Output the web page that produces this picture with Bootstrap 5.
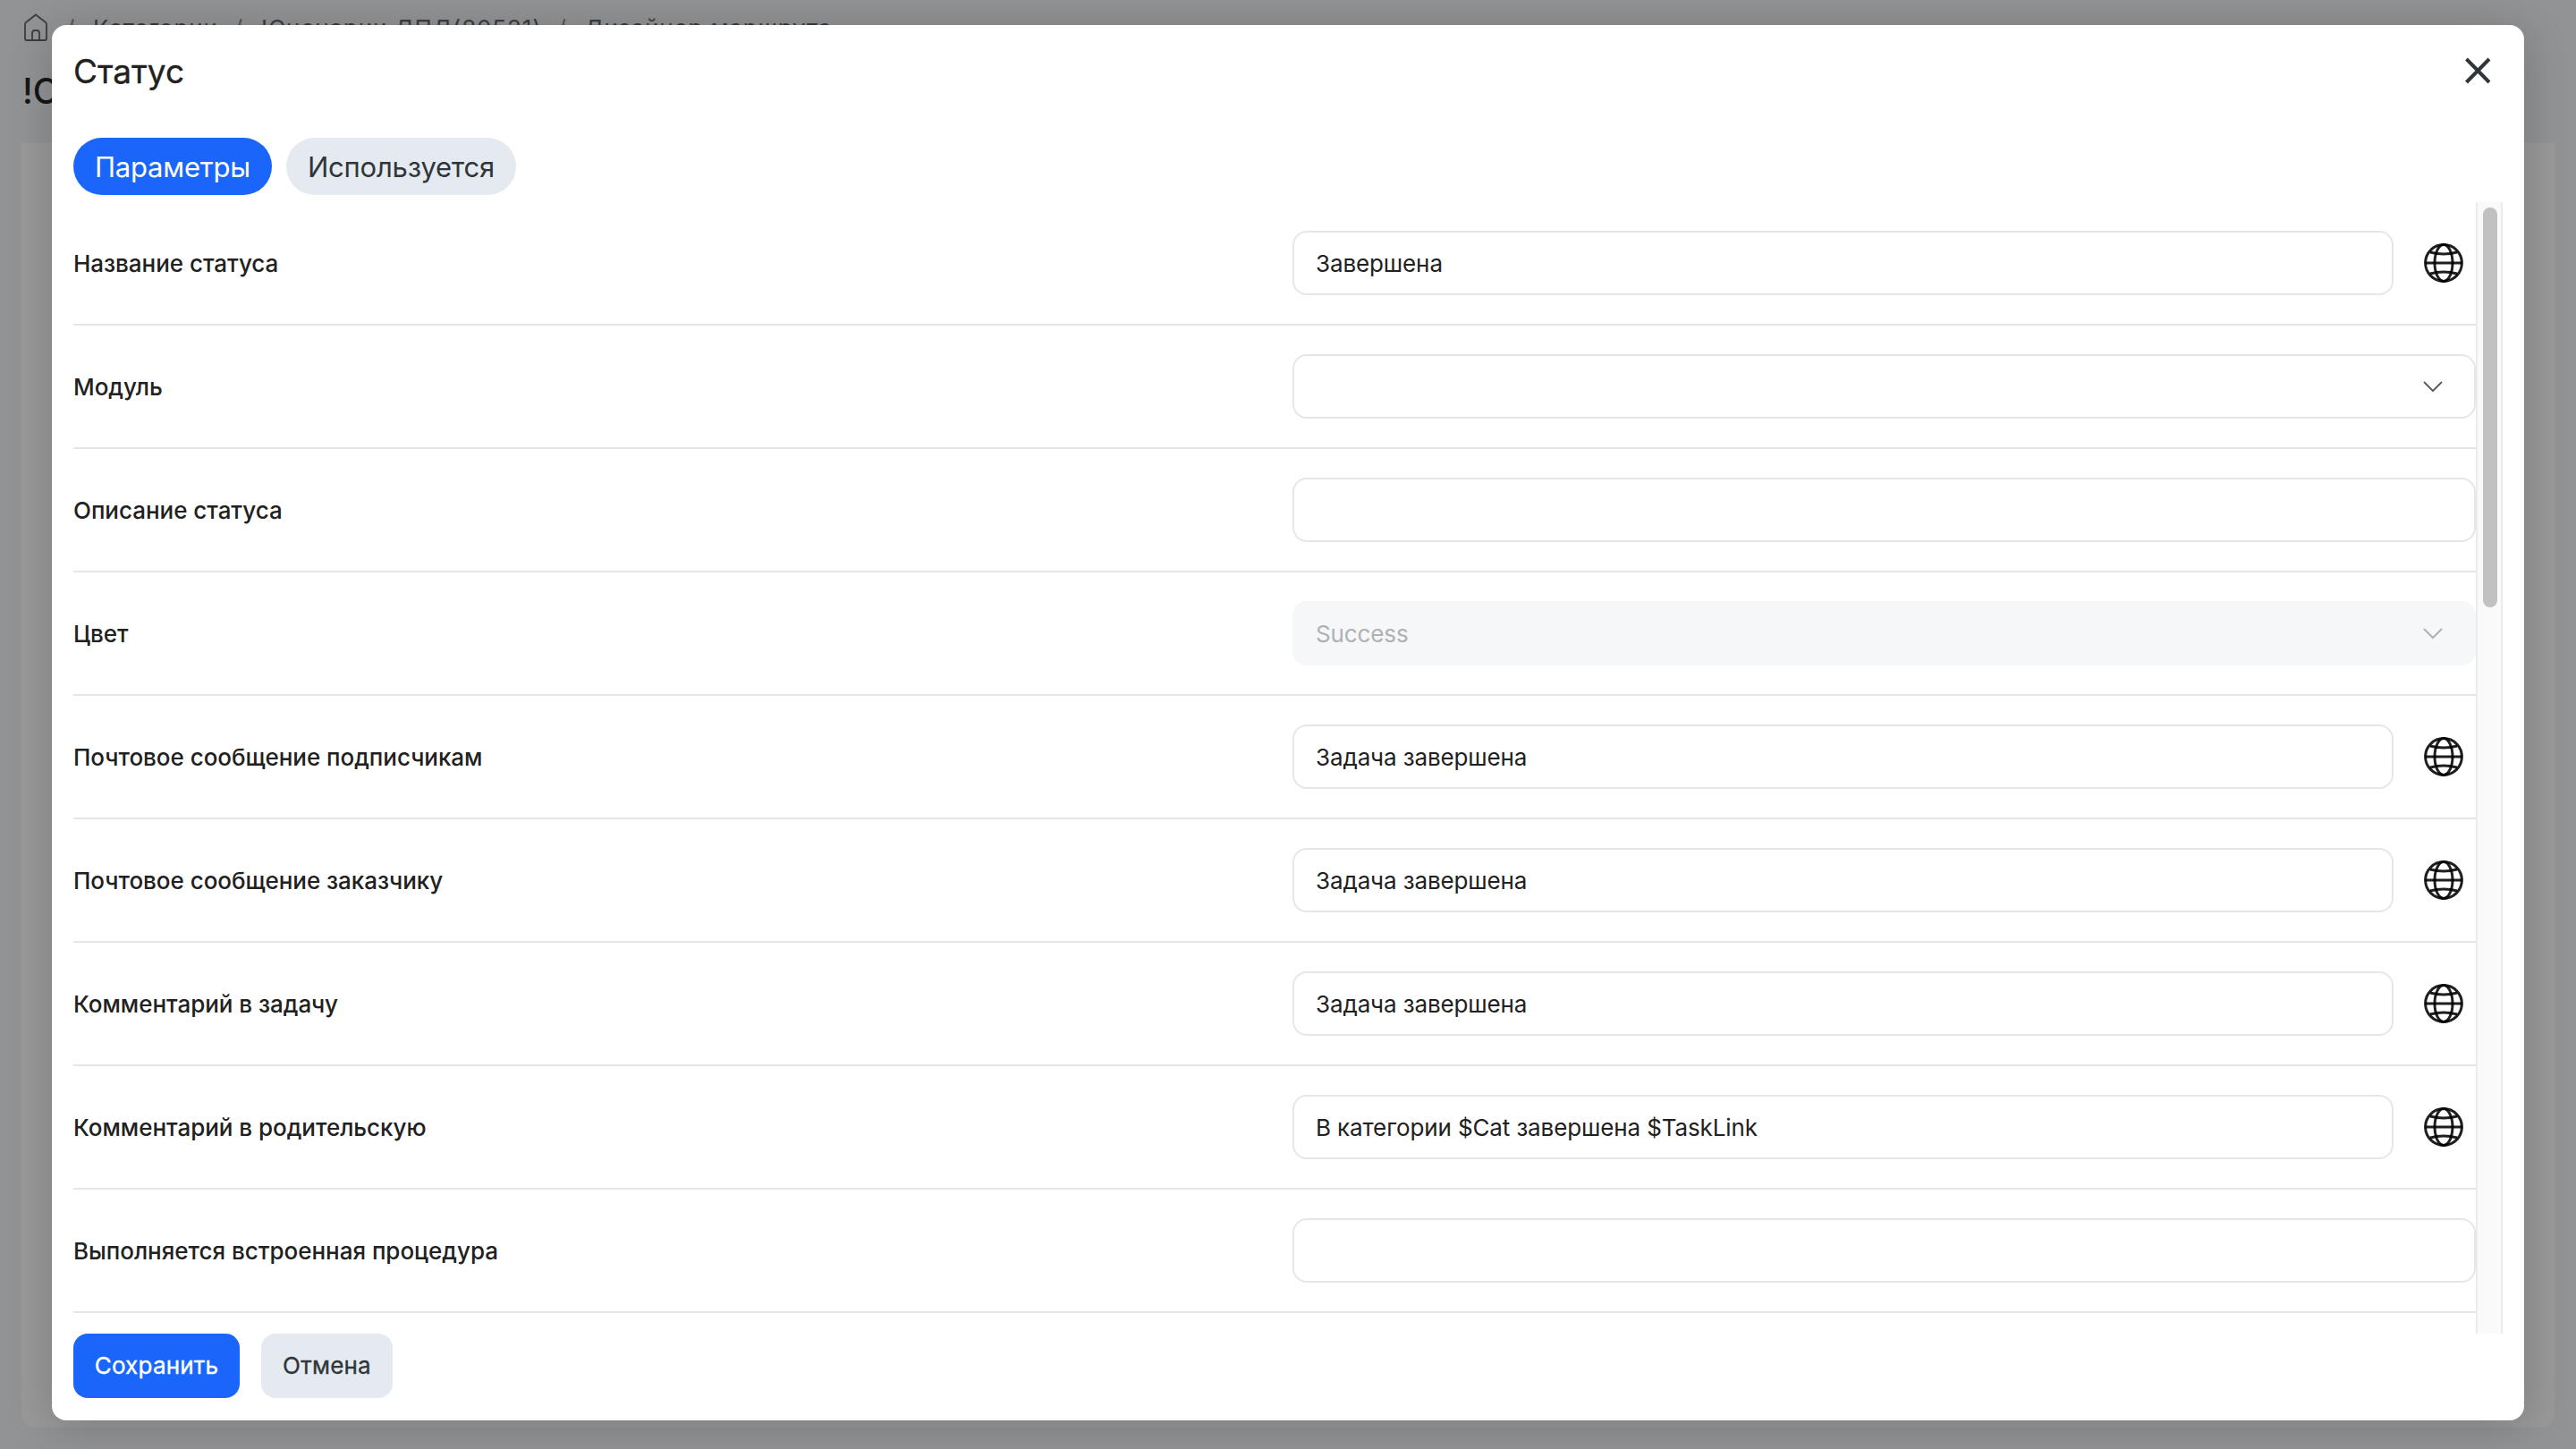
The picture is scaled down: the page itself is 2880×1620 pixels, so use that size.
<!DOCTYPE html>
<html lang="ru">
<head>
<meta charset="utf-8">
<title>Статус</title>
<link rel="stylesheet" href="https://cdn.jsdelivr.net/npm/bootstrap@5.3.0/dist/css/bootstrap.min.css">
<style>
html, body { height: 1620px; overflow: hidden; }
body { font-family: Inter, "Liberation Sans", sans-serif; font-size: 26px; line-height: 40px; color: #212121; background: #929395; letter-spacing: -.12px; }
.page { height: 1620px; padding: 12px 24px 0; }
.crumbs { height: 40px; color: #3c3d3e; font-size: 26px; letter-spacing: .85px; white-space: nowrap; }
.crumbs svg { margin-top: -2px; }
.crumb-s { margin: 0 20px 0 18px; width: 10px; color: #555; }
.page-title { height: 60px; margin-top: 20px; padding-left: 1px; font-size: 39px; font-weight: 500; line-height: 60px; color: #161616; white-space: nowrap; letter-spacing: 0; }
.page-panel { height: 1436px; margin-top: 28px; background: #999; border-radius: 0 0 15px 15px; }
.dialog { position: absolute; left: 58px; top: 28px; width: 2764px; height: 1560px; border-radius: 16px; padding: 0 24px; box-shadow: 0 6px 50px rgba(0,0,0,.2); }
.dialog-title { height: 102px; padding-top: 1px; font-size: 37px; -webkit-text-stroke: .35px currentColor; letter-spacing: 0; }
.close-x { margin: -2px 12px 0 0; }
.tab-row { height: 96px; padding-top: 24px; gap: 16px; }
.tab-pill { height: 64px; line-height: 64px; border-radius: 32px; padding: 1px 0 0; text-align: center; font-size: 31px; letter-spacing: -.2px; border: 0; }
.tab-a { width: 222px; } .tab-b { width: 257px; }
.c-blue { background: #1b66fa; color: #fff; } .c-gray { background: #e5eaf1; color: #30363a; }
.scroll { height: 1265px; }
.rows { width: 2686px; }
.form-line { height: 138px; border-bottom: 2px solid #e6e6e6; }
.lbl { width: 1363px; font-weight: 500; letter-spacing: -.03px; padding-top: 2px; }
.box { height: 72px; border: 2px solid #e6e6e6; border-radius: 16px; padding: 2px 35px 0 24px; color: #212121; }
.box svg { margin-top: -2px; }
.box-off { background: #f5f7f9; border-color: #f5f7f9; color: #b0b1b2; }
.globe-btn { width: 92px; padding-left: 34px; }
.track { width: 30px; background: #fafafa; border: solid #ebebeb; border-width: 0 2px; padding: 6px; }
.thumb { width: 16px; height: 447px; border-radius: 8px; background: #c1c1c1; }
.act { height: 72px; border-radius: 16px; border: 0; padding: 0; font-size: 26px; -webkit-text-stroke: .35px currentColor; letter-spacing: .2px; }
.act-a { width: 186px; } .act-b { width: 147px; }
svg { display: block; flex: none; }
</style>
</head>
<body>
<svg width="0" height="0" class="position-absolute">
 <symbol id="globe" viewBox="0 0 44 44"><g fill="none" stroke="#000" stroke-opacity=".88" stroke-width="3"><circle cx="22" cy="22" r="20.4"/><ellipse cx="22" cy="22" rx="10" ry="20.4"/><path d="M1.5 22H42.5M7 10Q22 14 37 10M7 34Q22 30 37 34"/></g></symbol>
 <symbol id="chev" viewBox="0 0 22 13"><path d="M1 1L11 11L21 1" fill="none" stroke="currentColor" stroke-width="2"/></symbol>
</svg>
<div class="page">
 <div class="crumbs d-flex align-items-center">
  <svg width="32" height="36" viewBox="0 0 32 36"><path d="M4 14Q4 12.800 5 12L16 3.500L27 12Q28 12.800 28 14V30Q28 32 26 32H6Q4 32 4 30ZM12 32V24Q12 21 15 21H17Q20 21 20 24V32" fill="none" stroke="#3c3d3e" stroke-width="1.800"/></svg>
  <span class="crumb-s">/</span><span>Категории</span><span class="crumb-s">/</span><span>!Сценарии ДПД(80521)</span><span class="crumb-s">/</span><span>Дизайнер маршрута</span>
 </div>
 <div class="page-title">!С</div>
 <div class="page-panel"></div>
</div>
<div class="dialog bg-white d-flex flex-column">
 <div class="dialog-title d-flex align-items-center justify-content-between"><span>Статус</span>
  <svg class="close-x" width="32" height="32" viewBox="0 0 32 32"><path d="M3.500 3L29 29M29 3L3.500 29" stroke="#30363a" stroke-width="4"/></svg></div>
 <div class="tab-row d-flex"><button class="tab-pill tab-a c-blue">Параметры</button><button class="tab-pill tab-b c-gray">Используется</button></div>
 <div class="scroll d-flex">
  <div class="rows flex-shrink-0">
   <div class="form-line d-flex align-items-center"><div class="lbl">Название статуса</div><div class="box d-flex align-items-center flex-fill">Завершена</div><div class="globe-btn"><svg width="44" height="44"><use href="#globe"/></svg></div></div>
   <div class="form-line d-flex align-items-center"><div class="lbl">Модуль</div><div class="box d-flex align-items-center justify-content-end flex-fill"><svg width="22" height="13" style="color:#5f6062"><use href="#chev"/></svg></div></div>
   <div class="form-line d-flex align-items-center"><div class="lbl">Описание статуса</div><div class="box flex-fill"></div></div>
   <div class="form-line d-flex align-items-center"><div class="lbl">Цвет</div><div class="box box-off d-flex align-items-center justify-content-between flex-fill">Success<svg width="22" height="13"><use href="#chev"/></svg></div></div>
   <div class="form-line d-flex align-items-center"><div class="lbl">Почтовое сообщение подписчикам</div><div class="box d-flex align-items-center flex-fill">Задача завершена</div><div class="globe-btn"><svg width="44" height="44"><use href="#globe"/></svg></div></div>
   <div class="form-line d-flex align-items-center"><div class="lbl">Почтовое сообщение заказчику</div><div class="box d-flex align-items-center flex-fill">Задача завершена</div><div class="globe-btn"><svg width="44" height="44"><use href="#globe"/></svg></div></div>
   <div class="form-line d-flex align-items-center"><div class="lbl">Комментарий в задачу</div><div class="box d-flex align-items-center flex-fill">Задача завершена</div><div class="globe-btn"><svg width="44" height="44"><use href="#globe"/></svg></div></div>
   <div class="form-line d-flex align-items-center"><div class="lbl">Комментарий в родительскую</div><div class="box d-flex align-items-center flex-fill">В категории $Cat завершена $TaskLink</div><div class="globe-btn"><svg width="44" height="44"><use href="#globe"/></svg></div></div>
   <div class="form-line d-flex align-items-center"><div class="lbl">Выполняется встроенная процедура</div><div class="box flex-fill"></div></div>
  </div>
  <div class="track flex-shrink-0"><div class="thumb"></div></div>
 </div>
 <div class="d-flex gap-4"><button class="act act-a c-blue">Сохранить</button><button class="act act-b c-gray">Отмена</button></div>
</div>
<script src="https://cdn.jsdelivr.net/npm/bootstrap@5.3.0/dist/js/bootstrap.bundle.min.js"></script>
</body>
</html>
